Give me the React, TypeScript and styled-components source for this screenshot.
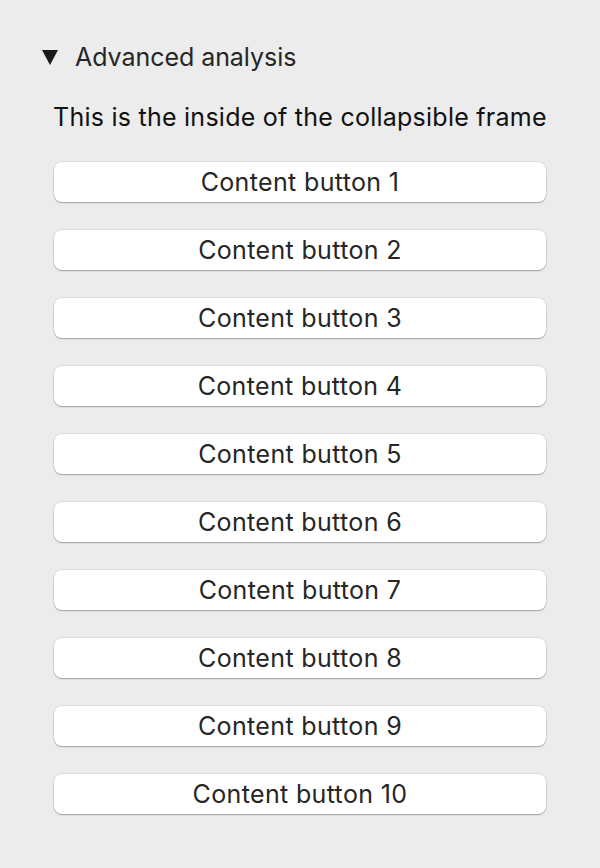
import React from 'react';
import styled, { createGlobalStyle } from 'styled-components';

const GlobalStyle = createGlobalStyle`
  html, body {
    margin: 0;
    padding: 0;
    background: #ececec;
  }
  body {
    font-family: Inter, "Noto Sans", "Liberation Sans", sans-serif;
    color: #222;
  }
`;

const Page = styled.div`
  width: 600px;
  height: 868px;
  box-sizing: border-box;
  padding: 40px 54px 0 42px;
`;

const Header = styled.div`
  display: flex;
  align-items: center;
  height: 34px;
  gap: 17px;
  cursor: pointer;
`;

const Title = styled.span`
  font-size: 25px;
  letter-spacing: -0.05px;
  color: #262626;
`;

const Body = styled.div`
  display: flex;
  flex-direction: column;
  padding-left: 12px;
  padding-top: 27px;
`;

const Description = styled.p`
  margin: 0 0 0 -1px;
  height: 32px;
  line-height: 32px;
  font-size: 25px;
  letter-spacing: 0.25px;
  white-space: nowrap;
  color: #111;
`;

const ButtonList = styled.div`
  display: flex;
  flex-direction: column;
  gap: 28px;
  margin-top: 29px;
`;

const ContentButton = styled.button`
  height: 40px;
  width: 492px;
  border: none;
  border-radius: 8px;
  background: #fff;
  box-shadow: 0 0 0 0.5px rgba(0, 0, 0, 0.12), 0 1px 1.5px rgba(0, 0, 0, 0.28);
  font-family: inherit;
  font-size: 25px;
  letter-spacing: 0.35px;
  color: #262626;
  padding: 0;
  cursor: pointer;
`;

const Caret = () => (
  <svg width="16" height="15" viewBox="0 0 16 15">
    <polygon points="0,0 16,0 8,15" fill="#1a1a1a" />
  </svg>
);

const buttons = Array.from({ length: 10 }, (_, i) => `Content button ${i + 1}`);

export default function App() {
  return (
    <>
      <GlobalStyle />
      <Page>
        <Header>
          <Caret />
          <Title>Advanced analysis</Title>
        </Header>
        <Body>
          <Description>This is the inside of the collapsible frame</Description>
          <ButtonList>
            {buttons.map(label => (
              <ContentButton key={label}>{label}</ContentButton>
            ))}
          </ButtonList>
        </Body>
      </Page>
    </>
  );
}
